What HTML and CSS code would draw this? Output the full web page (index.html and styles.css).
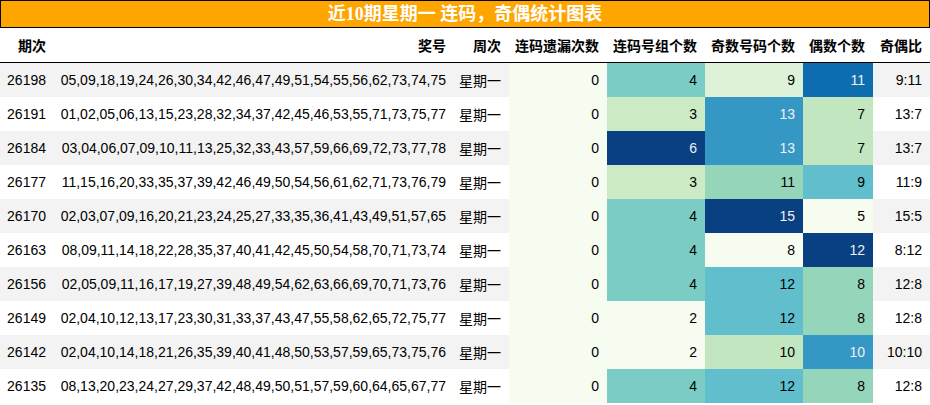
FILE: index.html
```html
<!DOCTYPE html>
<html lang="zh">
<head>
<meta charset="utf-8">
<title>近10期星期一 连码，奇偶统计图表</title>
<link rel="stylesheet" href="styles.css">
</head>
<body>
<div class="report">
  <div class="caption">近10期星期一 连码，奇偶统计图表</div>
  <table class="grid">
    <colgroup>
      <col class="c-issue"><col class="c-nums"><col class="c-week"><col class="c-miss"><col class="c-group"><col class="c-odd"><col class="c-even"><col class="c-ratio">
    </colgroup>
    <thead>
      <tr><th>期次</th><th>奖号</th><th>周次</th><th>连码遗漏次数</th><th>连码号组个数</th><th>奇数号码个数</th><th>偶数个数</th><th>奇偶比</th></tr>
    </thead>
    <tbody>
      <tr><td>26198</td><td>05,09,18,19,24,26,30,34,42,46,47,49,51,54,55,56,62,73,74,75</td><td>星期一</td><td class="g0">0</td><td class="g4">4</td><td class="g1">9</td><td class="g6 lt">11</td><td>9:11</td></tr>
      <tr><td>26191</td><td>01,02,05,06,13,15,23,28,32,34,37,42,45,46,53,55,71,73,75,77</td><td>星期一</td><td class="g0">0</td><td class="g2q">3</td><td class="g5 lt">13</td><td class="g2">7</td><td>13:7</td></tr>
      <tr><td>26184</td><td>03,04,06,07,09,10,11,13,25,32,33,43,57,59,66,69,72,73,77,78</td><td>星期一</td><td class="g0">0</td><td class="g7 lt">6</td><td class="g5 lt">13</td><td class="g2">7</td><td>13:7</td></tr>
      <tr><td>26177</td><td>11,15,16,20,33,35,37,39,42,46,49,50,54,56,61,62,71,73,76,79</td><td>星期一</td><td class="g0">0</td><td class="g2q">3</td><td class="g3">11</td><td class="g4s">9</td><td>11:9</td></tr>
      <tr><td>26170</td><td>02,03,07,09,16,20,21,23,24,25,27,33,35,36,41,43,49,51,57,65</td><td>星期一</td><td class="g0">0</td><td class="g4">4</td><td class="g7 lt">15</td><td class="g0">5</td><td>15:5</td></tr>
      <tr><td>26163</td><td>08,09,11,14,18,22,28,35,37,40,41,42,45,50,54,58,70,71,73,74</td><td>星期一</td><td class="g0">0</td><td class="g4">4</td><td class="g0">8</td><td class="g7 lt">12</td><td>8:12</td></tr>
      <tr><td>26156</td><td>02,05,09,11,16,17,19,27,39,48,49,54,62,63,66,69,70,71,73,76</td><td>星期一</td><td class="g0">0</td><td class="g4">4</td><td class="g4s">12</td><td class="g3">8</td><td>12:8</td></tr>
      <tr><td>26149</td><td>02,04,10,12,13,17,23,30,31,33,37,43,47,55,58,62,65,72,75,77</td><td>星期一</td><td class="g0">0</td><td class="g0">2</td><td class="g4s">12</td><td class="g3">8</td><td>12:8</td></tr>
      <tr><td>26142</td><td>02,04,10,14,18,21,26,35,39,40,41,48,50,53,57,59,65,73,75,76</td><td>星期一</td><td class="g0">0</td><td class="g0">2</td><td class="g2">10</td><td class="g5 lt">10</td><td>10:10</td></tr>
      <tr><td>26135</td><td>08,13,20,23,24,27,29,37,42,48,49,50,51,57,59,60,64,65,67,77</td><td>星期一</td><td class="g0">0</td><td class="g4">4</td><td class="g4s">12</td><td class="g3">8</td><td>12:8</td></tr>
    </tbody>
  </table>
</div>
</body>
</html>
```

FILE: styles.css
```css
html, body {
  margin: 0;
  padding: 0;
  background: #ffffff;
}

.report {
  width: 930px;
  font-family: "Liberation Sans", "Noto Sans CJK SC", sans-serif;
  font-size: 14px;
  color: #000000;
}

.caption {
  box-sizing: border-box;
  height: 28px;
  border: 1px solid #000000;
  background: #ffa500;
  color: #ffffff;
  font-family: "Liberation Serif", "Noto Sans CJK SC", serif;
  font-weight: bold;
  font-size: 18px;
  line-height: 26px;
  text-align: center;
}

.grid {
  width: 930px;
  border-collapse: collapse;
  border-spacing: 0;
  table-layout: fixed;
}

.c-issue { width: 54px; }
.c-nums { width: 400px; }
.c-week { width: 55px; }
.c-miss { width: 98px; }
.c-group { width: 98px; }
.c-odd { width: 98px; }
.c-even { width: 70px; }
.c-ratio { width: 57px; }

.grid th,
.grid td {
  padding: 0 8px 0 0;
  text-align: right;
  white-space: nowrap;
  overflow: hidden;
}

.grid th {
  height: 34px;
  font-weight: bold;
  border-bottom: 1px solid #000000;
}

.grid td {
  height: 34px;
}

.grid tbody tr:nth-child(odd) {
  background: #f3f3f3;
}

.grid tbody tr:nth-child(even) {
  background: #ffffff;
}

/* GnBu gradient steps */
.grid td.g0 { background: #f7fcf0; }
.grid td.g1 { background: #ddf2d8; }
.grid td.g2q { background: #ccebc5; }
.grid td.g2 { background: #c2e7c0; }
.grid td.g3 { background: #95d6bb; }
.grid td.g4 { background: #7bccc4; }
.grid td.g4s { background: #61becd; }
.grid td.g5 { background: #3597c4; }
.grid td.g6 { background: #0d6daf; }
.grid td.g7 { background: #084081; }
.grid td.lt { color: #f1f1f1; }
```
